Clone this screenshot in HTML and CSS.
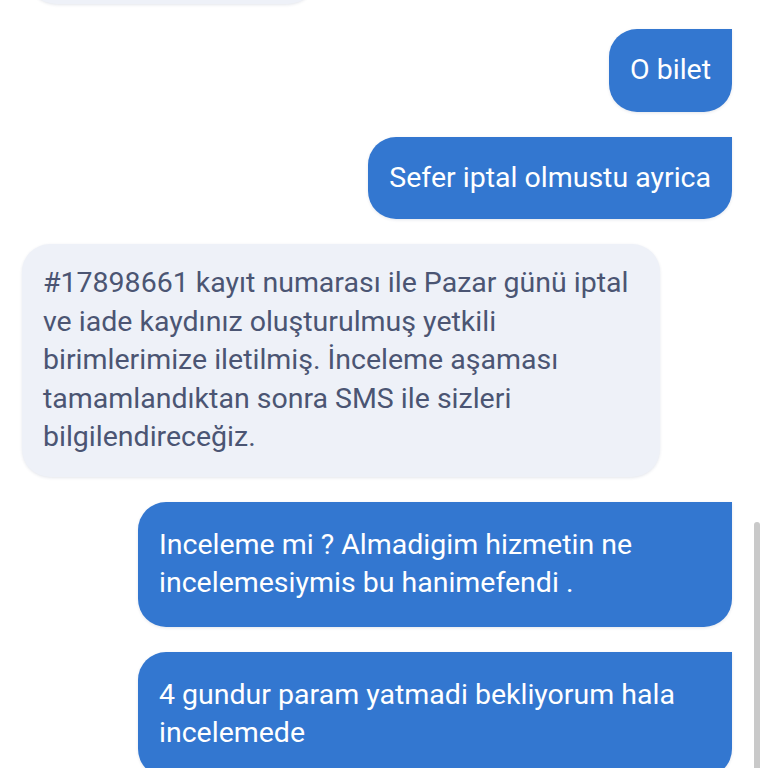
FILE: index.html
```html
<!DOCTYPE html>
<html lang="tr">
<head>
    <meta charset="UTF-8">
    <meta name="viewport" content="width=device-width, initial-scale=1.0">
    <title>sohbet</title>
    <link rel="stylesheet" href="styles.css">
</head>
<body>
    <div class="chat">
        <div class="msg in cut"></div>

        <div class="msg out">O bilet</div>
        <div class="msg out">Sefer iptal olmustu ayrica</div>

        <div class="msg in wide">#17898661 kayıt numarası ile Pazar günü iptal<br>ve iade kaydınız oluşturulmuş yetkili<br>birimlerimize iletilmiş. İnceleme aşaması<br>tamamlandıktan sonra SMS ile sizleri<br>bilgilendireceğiz.</div>

        <div class="msg out full">Inceleme mi ? Almadigim hizmetin ne<br>incelemesiymis bu hanimefendi .</div>
        <div class="msg out full">4 gundur param yatmadi bekliyorum hala<br>incelemede</div>

        <div class="scrollbar"></div>
    </div>
</body>
</html>
```

FILE: styles.css
```css
* {
    margin: 0;
    padding: 0;
    box-sizing: border-box;
}

html, body {
    height: 100%;
    overflow: hidden;
    background: #fff;
}

body {
    font-family: Roboto, "Noto Sans", sans-serif;
}

.chat {
    position: relative;
    height: 100%;
    display: flex;
    flex-direction: column;
    gap: 25px;
    padding: 0 36px 0 22px;
}

.msg {
    flex-shrink: 0;
    font-size: 28.5px;
    line-height: 38.5px;
    padding: 22px 21px;
    border-radius: 28px;
    white-space: nowrap;
    box-shadow: 0 1px 3px rgba(40, 60, 100, 0.12);
}

.msg.out {
    align-self: flex-end;
    background-color: #3377d0;
    color: #fff;
    border-top-right-radius: 0;
}

.msg.out.full {
    width: 594px;
    padding-top: 24px;
    padding-bottom: 24px;
}

.msg.in {
    align-self: flex-start;
    background-color: #eef1f8;
    color: #4b5573;
}

.msg.in.wide {
    width: 638px;
    padding-top: 20px;
    padding-bottom: 20px;
}

.msg.in.cut {
    width: 288px;
    height: 60px;
    margin-top: -56px;
    margin-left: 6px;
}

.scrollbar {
    position: absolute;
    right: 8px;
    top: 522px;
    width: 6px;
    height: 260px;
    border-radius: 3px;
    background-color: #c9c9c9;
}
```
